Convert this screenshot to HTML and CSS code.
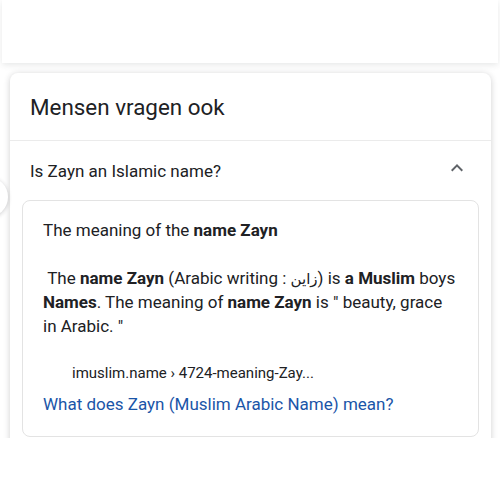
FILE: index.html
```html
<!DOCTYPE html>
<html>
<head>
<meta charset="utf-8">
<link rel="stylesheet" href="styles.css">
</head>
<body>
<div class="viewport">
  <div class="prev-card"></div>
  <div class="card">
    <div class="card-title">Mensen vragen ook</div>
    <div class="question">
      <span>Is Zayn an Islamic name?</span>
      <svg class="chev" width="24" height="24" viewBox="0 0 24 24"><path d="M7.41 15.41L12 10.83l4.59 4.58L18 14l-6-6-6 6z" fill="#5f6368"/></svg>
    </div>
    <div class="answer">
      <div class="answer-head">The meaning of the <b>name Zayn</b></div>
      <p class="answer-text">&nbsp;The <b>name Zayn</b> (Arabic writing : <span class="ar" lang="ar" dir="rtl">زاين</span>) is <b>a Muslim</b> boys <b>Names</b>. The meaning of <b>name Zayn</b> is " beauty, grace in Arabic. "</p>
      <div class="source">imuslim.name › 4724-meaning-Zay...</div>
      <a class="link" href="#">What does Zayn (Muslim Arabic Name) mean?</a>
    </div>
    <div class="more"></div>
  </div>
  <div class="side-btn"></div>
</div>
</body>
</html>
```

FILE: styles.css
```css
html, body {
  margin: 0;
  padding: 0;
  background: #fff;
}
body {
  font-family: Roboto, "Noto Sans", "DejaVu Sans", sans-serif;
  color: #202124;
}
.viewport {
  position: relative;
  height: 438px;
  overflow: hidden;
}
.prev-card {
  height: 63px;
  margin: 0 2px;
  background: #fff;
  box-shadow: 0 2px 6px rgba(60, 64, 67, 0.12);
}
.card {
  margin: 10px 9px 0 10px;
  background: #fff;
  border-radius: 8px;
  box-shadow: 0 1px 6px rgba(32, 33, 36, 0.22);
}
.card-title {
  height: 68px;
  box-sizing: border-box;
  padding: 20px 20px 0;
  font-size: 22.4px;
  line-height: 28px;
  border-bottom: 1px solid #ebebeb;
}
.question {
  display: flex;
  align-items: center;
  justify-content: space-between;
  height: 59px;
  padding: 0 22px 0 20px;
  font-size: 17px;
}
.chev {
  margin-top: -6px;
}
.answer {
  margin: 0 12px;
  border: 1px solid #e3e3e3;
  border-radius: 8px;
  padding: 17px 20px 20px 20px;
  font-size: 17px;
  line-height: 24px;
}
.answer-head {
  margin: 0;
}
.answer-text {
  margin: 24px 0 0;
}
.ar {
  font-size: 15px;
  line-height: 20px;
}
.source {
  margin-top: 25px;
  padding-left: 29px;
  font-size: 15px;
  line-height: 20px;
  color: #202124;
}
.link {
  display: block;
  margin-top: 9px;
  color: #1a55a8;
  text-decoration: none;
}
.more {
  height: 40px;
}
.side-btn {
  position: absolute;
  left: -32px;
  top: 177px;
  width: 40px;
  height: 40px;
  border-radius: 50%;
  background: #fff;
  box-shadow: 0 1px 4px rgba(32, 33, 36, 0.22);
}
```
